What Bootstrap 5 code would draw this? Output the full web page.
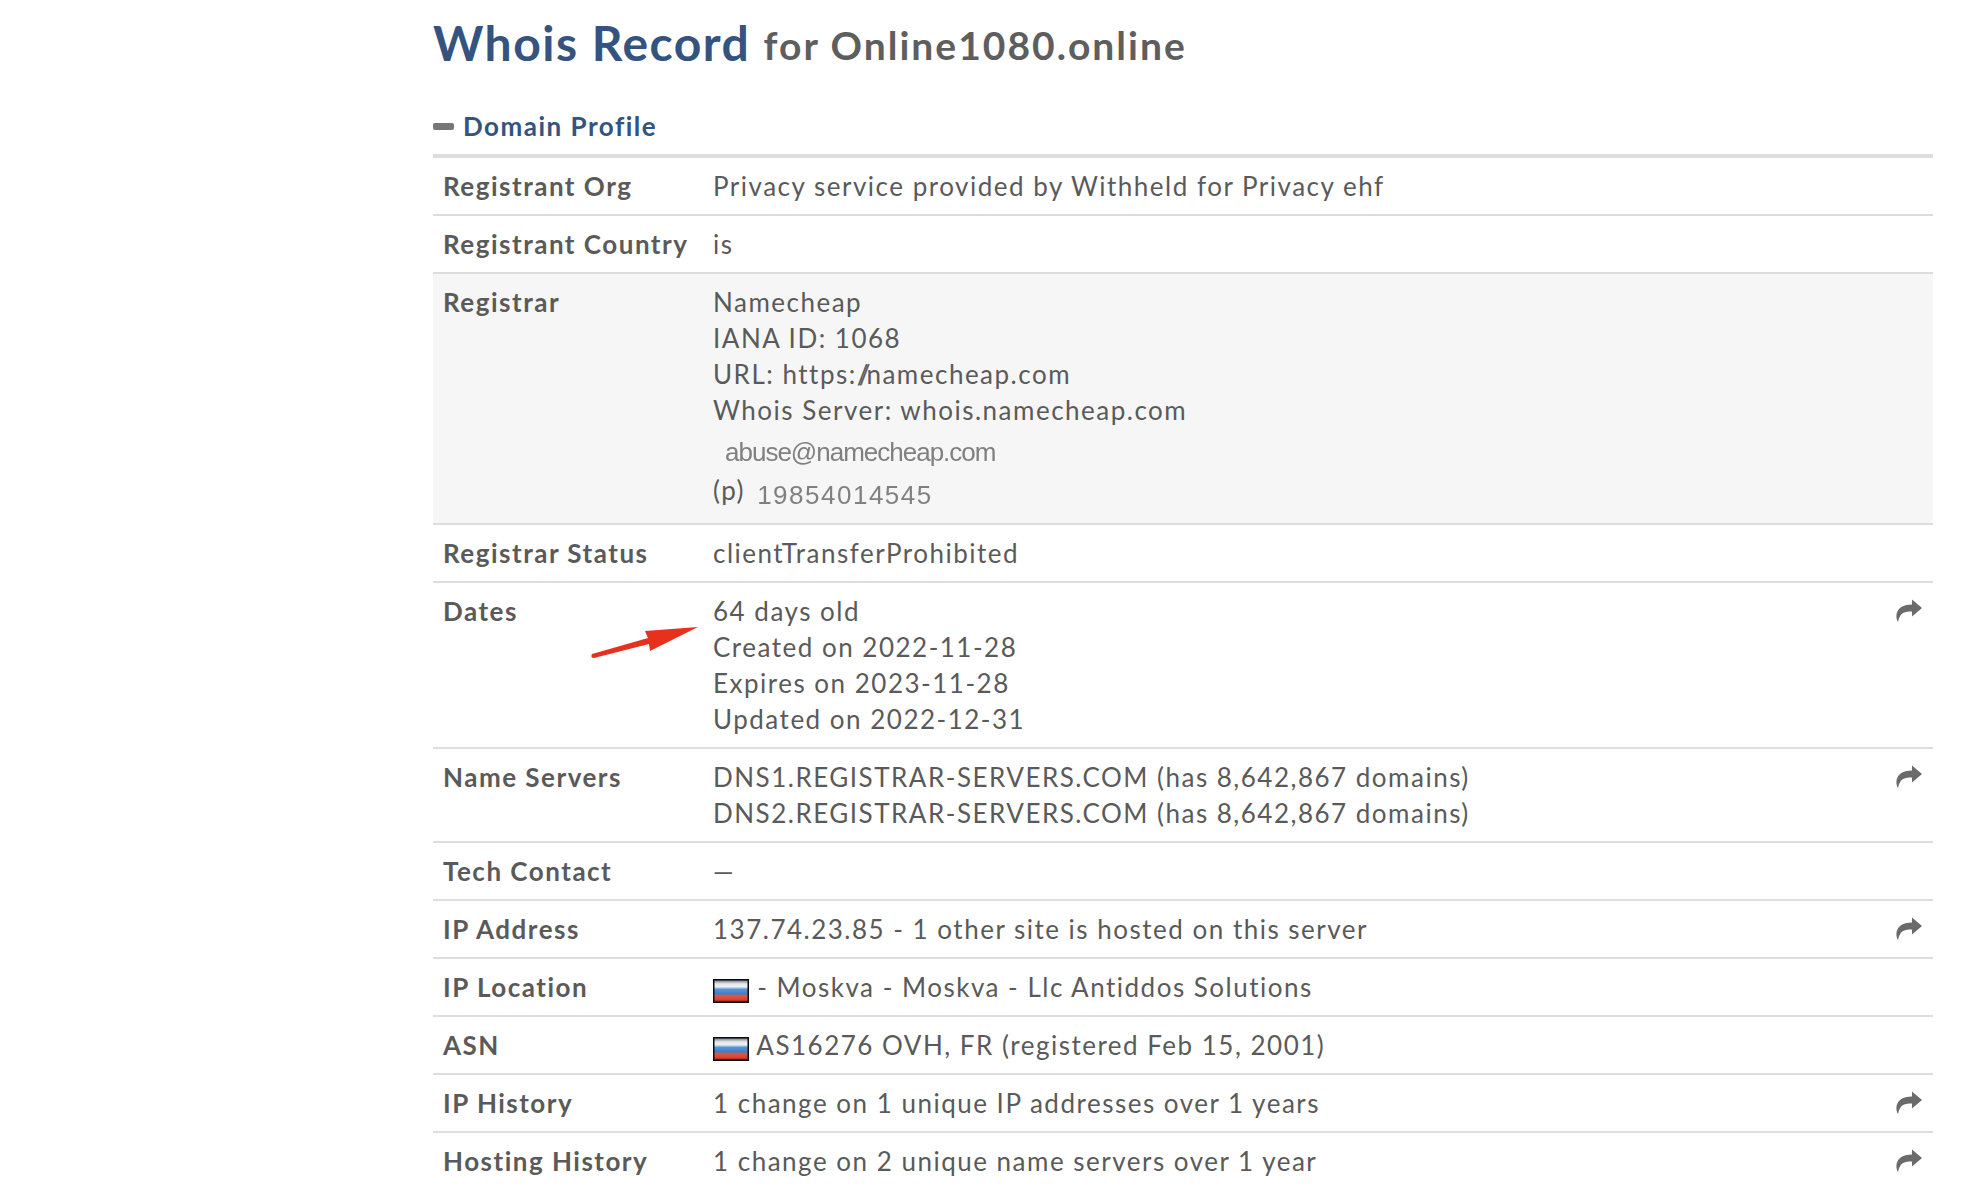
<!DOCTYPE html>
<html lang="en">
<head>
<meta charset="utf-8">
<title>Whois Record for Online1080.online</title>
<link rel="stylesheet" href="https://cdn.jsdelivr.net/npm/bootstrap@5.3.0/dist/css/bootstrap.min.css">
<style>
html, body { overflow: hidden; height: 1186px; }
body { background: #fff; font-family: Lato, "Liberation Sans", sans-serif; color: #555; font-size: 26px; }
.whois-wrap { margin-left: 433px; width: 1500px; padding-top: 13px; }
.whois-title { font-size: 48px; font-weight: 700; color: #34537f; line-height: 60px; margin: 0 0 32px; letter-spacing: 1.5px; }
.whois-title small { font-size: 39px; color: #5e5e5e; font-weight: 700; letter-spacing: 2px; position: relative; top: -1px; }
.section-head { display: flex; align-items: center; font-size: 26px; font-weight: 700; color: #34537f; line-height: 36px; letter-spacing: 1.5px; padding-bottom: 10px; border-bottom: 4px solid #ddd; }
.minus-bar { width: 21px; height: 7px; border-radius: 2px; background: #777; margin-right: 9px; }
.whois-table { margin: 0; width: 100%; border-collapse: collapse; letter-spacing: 1.5px; }
.whois-table td { padding: 10px; border: 0; border-bottom: 2px solid #ddd; line-height: 36px; vertical-align: top; color: #5a5a5a; background: transparent; box-shadow: none; }
.whois-table tr.shade td { background: #f6f6f6; }
.whois-table td.lbl { width: 270px; font-weight: 700; padding-right: 0; }
.whois-table td.val { padding-left: 10px; padding-right: 0; }
.whois-table td.act { width: 40px; text-align: right; padding-left: 0; }
.share-ico { display: block; width: 28px; height: 24px; margin: 6px 0 0 auto; fill: #6b6b6b; }
.slash-pair { letter-spacing: -4px; }
.blur-img { font-family: "Liberation Sans", sans-serif; font-size: 26px; color: #808080; letter-spacing: -1px; filter: blur(.7px); }
.blur-mail { margin-left: 12px; }
.blur-digits { letter-spacing: 1.5px; margin-left: 4px; vertical-align: -4px; }
.blur-first { padding-top: 5px; line-height: 37px; }
.blur-second { padding-top: 1px; height: 42px; }
.flag-ico { width: 36px; height: 24px; vertical-align: -6px; }
.date-cell { position: relative; }
.arrow-mark { position: absolute; left: -113px; top: 44px; width: 108px; height: 35px; }
</style>
</head>
<body>
<svg width="0" height="0" class="d-block" aria-hidden="true"><defs><linearGradient id="ruFlag" x1="0" y1="0" x2="0" y2="1"><stop offset="0" stop-color="#76828e"/><stop offset=".16" stop-color="#e6e8ea"/><stop offset=".3" stop-color="#eef0f3"/><stop offset=".42" stop-color="#5b94d6"/><stop offset=".62" stop-color="#3f7fc6"/><stop offset=".74" stop-color="#dd5644"/><stop offset=".9" stop-color="#e2402c"/><stop offset="1" stop-color="#9c2618"/></linearGradient></defs></svg>
<div class="whois-wrap">
  <h1 class="whois-title">Whois Record <small>for Online1080.online</small></h1>
  <div class="section-head"><span class="minus-bar"></span>Domain Profile</div>
  <table class="table whois-table">
    <tbody>
      <tr><td class="lbl">Registrant Org</td><td class="val">Privacy service provided by Withheld for Privacy ehf</td><td class="act"></td></tr>
      <tr><td class="lbl">Registrant Country</td><td class="val">is</td><td class="act"></td></tr>
      <tr class="shade"><td class="lbl">Registrar</td><td class="val">Namecheap<br>IANA ID: 1068<br>URL: https:<span class="slash-pair">//</span>namecheap.com<br>Whois Server: whois.namecheap.com
        <div class="blur-first"><span class="blur-img blur-mail">abuse@namecheap.com</span></div>
        <div class="blur-second">(p) <span class="blur-img blur-digits">19854014545</span></div></td><td class="act"></td></tr>
      <tr><td class="lbl">Registrar Status</td><td class="val">clientTransferProhibited</td><td class="act"></td></tr>
      <tr><td class="lbl">Dates</td><td class="val date-cell">
        <svg class="arrow-mark" viewBox="0 0 108 35" aria-hidden="true"><path d="M2 27 58 11 55 4 108 0 60 24 59 17 4 31Q0 31 2 27Z" fill="#e8301f"/></svg>
        64 days old<br>Created on 2022-11-28<br>Expires on 2023-11-28<br>Updated on 2022-12-31</td><td class="act"><svg class="share-ico" viewBox="0 0 28 24" aria-hidden="true"><path d="M17 .5 27 9 17 17.500V12.500C10 12.500 5 13 3 23 0 18 0 5.500 17 5.500Z"/></svg></td></tr>
      <tr><td class="lbl">Name Servers</td><td class="val">DNS1.REGISTRAR-SERVERS.COM (has 8,642,867 domains)<br>DNS2.REGISTRAR-SERVERS.COM (has 8,642,867 domains)</td><td class="act"><svg class="share-ico" viewBox="0 0 28 24" aria-hidden="true"><path d="M17 .5 27 9 17 17.500V12.500C10 12.500 5 13 3 23 0 18 0 5.500 17 5.500Z"/></svg></td></tr>
      <tr><td class="lbl">Tech Contact</td><td class="val">—</td><td class="act"></td></tr>
      <tr><td class="lbl">IP Address</td><td class="val">137.74.23.85 - 1 other site is hosted on this server</td><td class="act"><svg class="share-ico" viewBox="0 0 28 24" aria-hidden="true"><path d="M17 .5 27 9 17 17.500V12.500C10 12.500 5 13 3 23 0 18 0 5.500 17 5.500Z"/></svg></td></tr>
      <tr><td class="lbl">IP Location</td><td class="val"><svg class="flag-ico" viewBox="0 0 36 24" aria-hidden="true"><rect width="36" height="24" fill="#0a0a0a"/><rect x="1.500" y="1.500" width="33" height="21" fill="url(#ruFlag)"/></svg> - Moskva - Moskva - Llc Antiddos Solutions</td><td class="act"></td></tr>
      <tr><td class="lbl">ASN</td><td class="val"><svg class="flag-ico" viewBox="0 0 36 24" aria-hidden="true"><rect width="36" height="24" fill="#0a0a0a"/><rect x="1.500" y="1.500" width="33" height="21" fill="url(#ruFlag)"/></svg> AS16276 OVH, FR (registered Feb 15, 2001)</td><td class="act"></td></tr>
      <tr><td class="lbl">IP History</td><td class="val">1 change on 1 unique IP addresses over 1 years</td><td class="act"><svg class="share-ico" viewBox="0 0 28 24" aria-hidden="true"><path d="M17 .5 27 9 17 17.500V12.500C10 12.500 5 13 3 23 0 18 0 5.500 17 5.500Z"/></svg></td></tr>
      <tr><td class="lbl">Hosting History</td><td class="val">1 change on 2 unique name servers over 1 year</td><td class="act"><svg class="share-ico" viewBox="0 0 28 24" aria-hidden="true"><path d="M17 .5 27 9 17 17.500V12.500C10 12.500 5 13 3 23 0 18 0 5.500 17 5.500Z"/></svg></td></tr>
    </tbody>
  </table>
</div>
<script src="https://cdn.jsdelivr.net/npm/bootstrap@5.3.0/dist/js/bootstrap.bundle.min.js"></script>
</body>
</html>
